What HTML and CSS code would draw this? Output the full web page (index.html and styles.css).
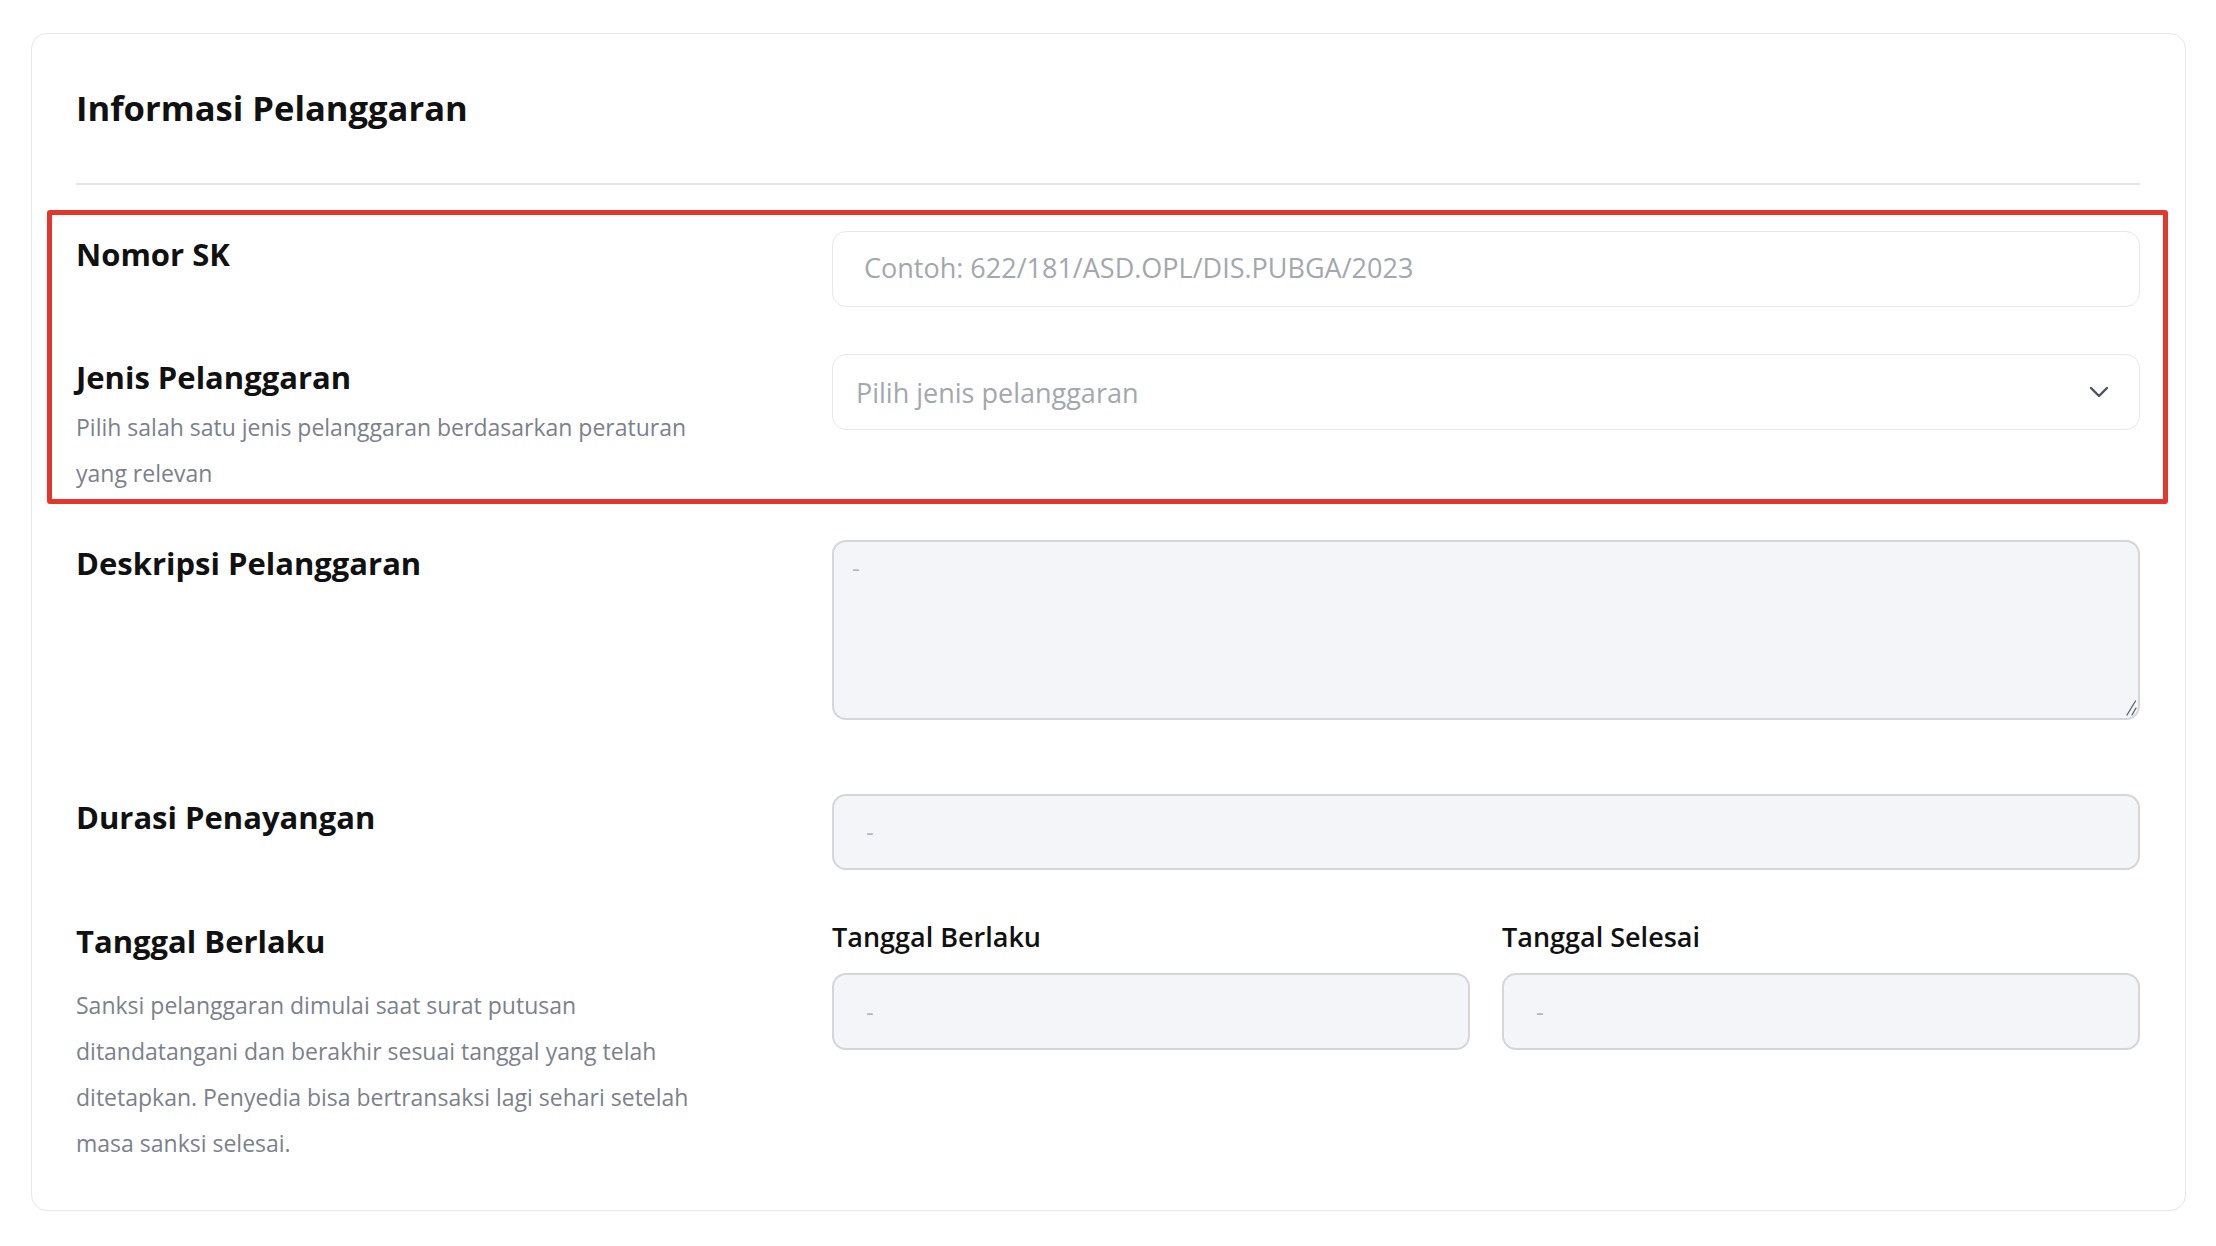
FILE: index.html
```html
<!DOCTYPE html>
<html lang="id">
<head>
<meta charset="utf-8">
<title>Informasi Pelanggaran</title>
<link rel="stylesheet" href="styles.css">
</head>
<body>
<div class="page">
  <section class="card">
    <h2 class="card-title">Informasi Pelanggaran</h2>
    <div class="divider"></div>

    <div class="highlight">
      <div class="row">
        <div class="label-col">
          <div class="label">Nomor SK</div>
        </div>
        <div class="control field"><span class="placeholder">Contoh: 622/181/ASD.OPL/DIS.PUBGA/2023</span></div>
      </div>

      <div class="row row-second">
        <div class="label-col">
          <div class="label">Jenis Pelanggaran</div>
          <p class="help help-tight">Pilih salah satu jenis pelanggaran berdasarkan peraturan yang relevan</p>
        </div>
        <div class="control select">
          <span class="placeholder select-text">Pilih jenis pelanggaran</span>
          <svg class="chevron" width="20" height="12" viewBox="0 0 20 12" aria-hidden="true"><path d="M2 2 L10 10 L18 2" fill="none" stroke="#4b5160" stroke-width="2.4" stroke-linecap="round" stroke-linejoin="round"/></svg>
        </div>
      </div>
    </div>

    <div class="row row-desc">
      <div class="label-col">
        <div class="label">Deskripsi Pelanggaran</div>
      </div>
      <div class="control disabled textarea">
        <span class="dash">-</span>
        <svg class="grip" width="14" height="16" viewBox="0 0 14 16" aria-hidden="true"><path d="M12.5 1 L4 15 M13 8 L9 15" fill="none" stroke="#5b5f66" stroke-width="1.3" stroke-linecap="round"/></svg>
      </div>
    </div>

    <div class="row row-durasi">
      <div class="label-col">
        <div class="label">Durasi Penayangan</div>
      </div>
      <div class="control disabled input"><span class="dash">-</span></div>
    </div>

    <div class="row row-tanggal">
      <div class="label-col">
        <div class="label">Tanggal Berlaku</div>
        <p class="help help-loose">Sanksi pelanggaran dimulai saat surat putusan ditandatangani dan berakhir sesuai tanggal yang telah ditetapkan. Penyedia bisa bertransaksi lagi sehari setelah masa sanksi selesai.</p>
      </div>
      <div class="date-grid">
        <div class="date-field">
          <div class="sublabel">Tanggal Berlaku</div>
          <div class="control disabled input date-input"><span class="dash">-</span></div>
        </div>
        <div class="date-field">
          <div class="sublabel">Tanggal Selesai</div>
          <div class="control disabled input date-input"><span class="dash">-</span></div>
        </div>
      </div>
    </div>
  </section>
</div>
</body>
</html>
```

FILE: styles.css
```css
* { box-sizing: border-box; }

html, body {
  margin: 0;
  background: #ffffff;
}

body {
  font-family: "Open Sans", "Noto Sans", "Liberation Sans", sans-serif;
  color: #111111;
}

.page {
  padding: 33px 30px 36px 31px;
}

.card {
  border: 1px solid #e6e7ea;
  border-radius: 16px;
  padding: 51px 45px 44px 44px;
  background: #ffffff;
}

.card-title {
  margin: 0;
  font-size: 34.6px;
  line-height: 46px;
  font-weight: 700;
  color: #111111;
}

.divider {
  height: 2px;
  background: #e5e7eb;
  margin-top: 52px;
}

.highlight {
  margin: 25px -28px 0 -29px;
  border: 5px solid #e5362c;
  border-radius: 3px;
  padding: 16px 23px 3px 24px;
}

.row {
  display: grid;
  grid-template-columns: 640px 1fr;
  column-gap: 116px;
  align-items: start;
}

.row-second { margin-top: 47px; }
.row-desc { margin-top: 36px; }
.row-durasi { margin-top: 74px; }
.row-tanggal { margin-top: 48px; }

.label {
  font-size: 31px;
  line-height: 40px;
  font-weight: 700;
  padding-top: 3px;
  color: #111111;
}

.help {
  margin: 0;
  font-size: 23px;
  line-height: 46px;
  color: #7b818c;
}

.help-tight { margin-top: 7px; }
.help-loose { margin-top: 21px; }

.control {
  display: flex;
  align-items: center;
  border-radius: 14px;
  height: 76px;
}

.field {
  border: 1.5px solid #e7e8ec;
  padding: 0 30px 3px 31px;
  background: #ffffff;
}

.select {
  border: 1.5px solid #e7e8ec;
  padding: 0 30px 0 23px;
  background: #ffffff;
  justify-content: space-between;
}

.placeholder {
  font-size: 27px;
  color: #a3a7ae;
  white-space: nowrap;
}

.chevron {
  display: block;
  flex: none;
}

.disabled {
  background: #f4f5f9;
  border: 2px solid #d4d6db;
}

.input {
  padding: 0 30px 0 32px;
}

.textarea {
  position: relative;
  height: 180px;
  align-items: flex-start;
  padding: 8px 18px 0 18px;
}

.dash {
  font-size: 24px;
  line-height: 36px;
  color: #b3b6bc;
}

.grip {
  position: absolute;
  right: 1px;
  bottom: 2px;
}

.date-grid {
  display: grid;
  grid-template-columns: 1fr 1fr;
  column-gap: 32px;
}

.sublabel {
  font-size: 27px;
  line-height: 38px;
  font-weight: 600;
  color: #111111;
}

.date-input {
  margin-top: 17px;
  height: 77px;
}
```
